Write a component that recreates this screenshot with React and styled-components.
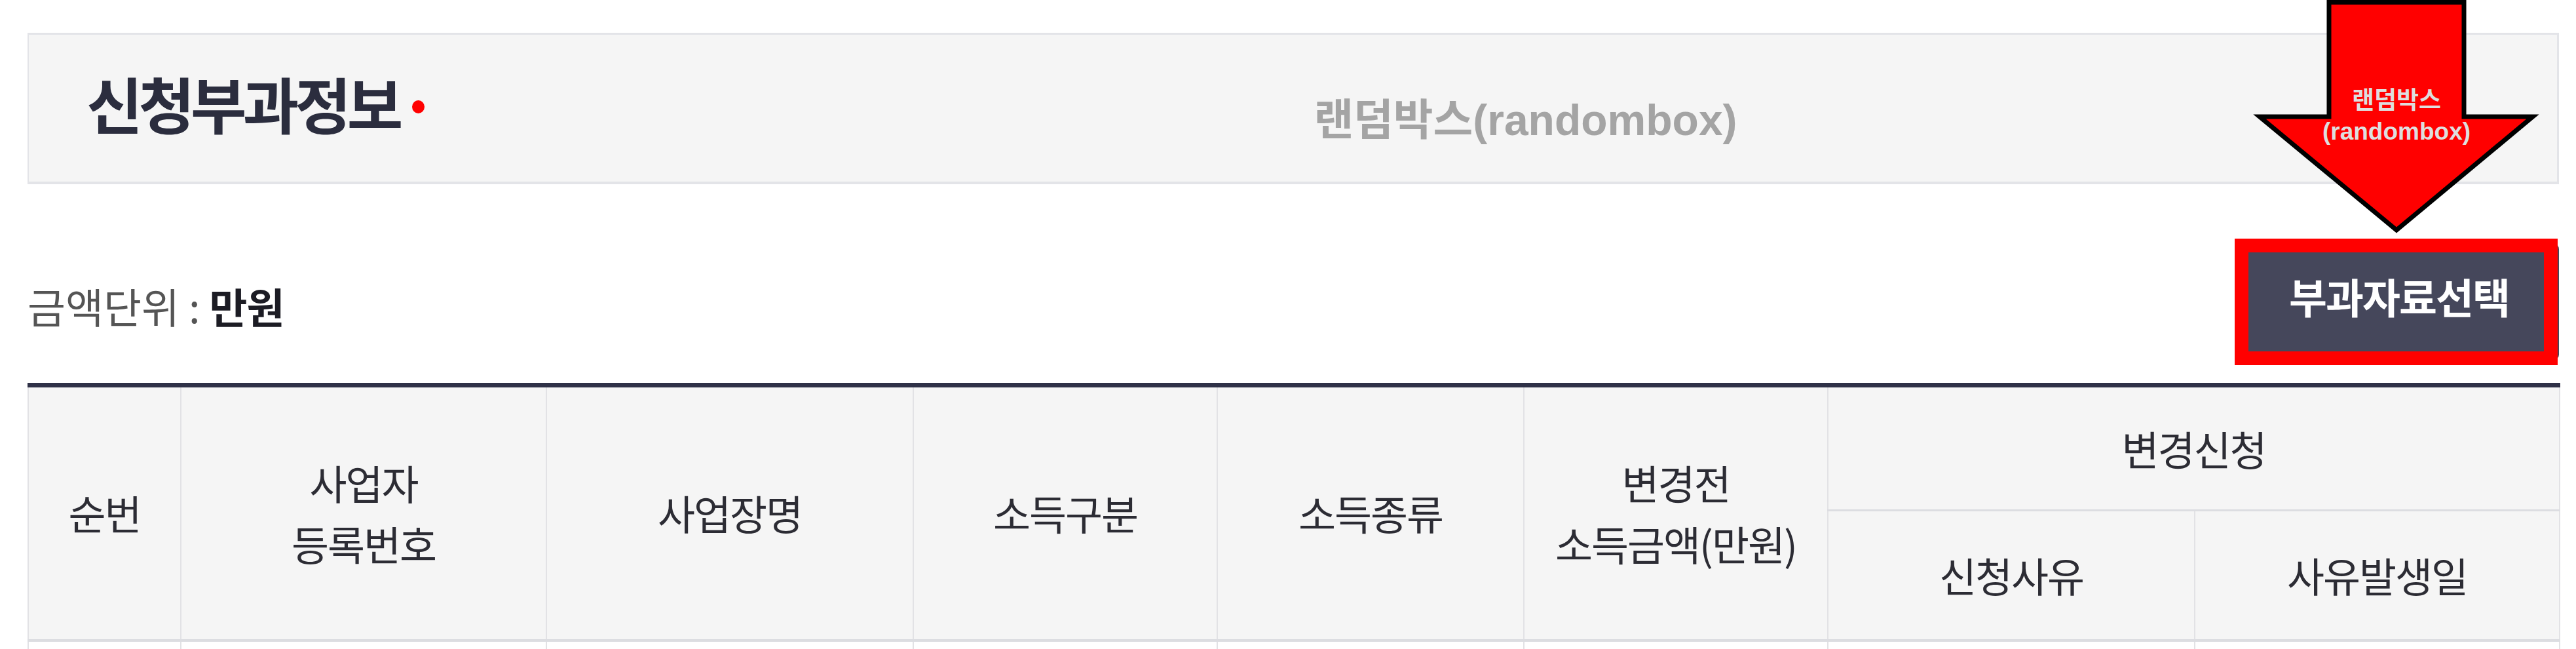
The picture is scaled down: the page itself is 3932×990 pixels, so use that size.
import React from "react";
import styled, { createGlobalStyle } from "styled-components";

const GlobalStyle = createGlobalStyle`
  html, body {
    margin: 0;
    padding: 0;
    background: #ffffff;
    overflow: hidden;
  }
  body {
    font-family: "Noto Sans CJK KR", "Noto Sans", sans-serif;
    color: #333333;
  }
`;

const Page = styled.div`
  position: relative;
  width: 3932px;
  height: 990px;
  overflow: hidden;
  box-sizing: border-box;
  padding: 50px 26px 0 42px;
`;

const InfoPanel = styled.section`
  display: flex;
  align-items: center;
  height: 231px;
  box-sizing: border-box;
  background: #f5f5f5;
  border: 3px solid #e3e4e8;
  border-left-width: 2px;
  border-bottom-width: 4px;
  padding-left: 88px;
`;

const Title = styled.h2`
  display: flex;
  align-items: center;
  margin: -18px 0 0;
  font-size: 93px;
  font-weight: 700;
  line-height: 1;
  letter-spacing: -6px;
  color: #2b2d3e;

  &::after {
    content: "";
    width: 19px;
    height: 20px;
    margin-left: 20px;
    margin-top: 14px;
    border-radius: 50%;
    background: #ff0000;
  }
`;

const RandomLabel = styled.span`
  margin-left: 1357px;
  margin-top: 36px;
  font-family: "Liberation Sans", "Noto Sans CJK KR", sans-serif;
  font-size: 66px;
  font-weight: 700;
  line-height: 1;
  color: #a4a4a4;
`;

const Callout = styled.div`
  position: absolute;
  left: 3434px;
  top: 0;
  width: 445px;
  height: 365px;
  z-index: 3;
  pointer-events: none;

  svg {
    display: block;
  }
`;

const CalloutText = styled.div`
  position: absolute;
  left: 0;
  top: 130px;
  width: 448px;
  text-align: center;
  font-family: "Liberation Sans", "Noto Sans CJK KR", sans-serif;
  font-size: 37px;
  font-weight: 700;
  line-height: 47px;
  color: #dedede;
`;

const Toolbar = styled.div`
  display: flex;
  align-items: center;
  justify-content: space-between;
  height: 177px;
  margin-top: 91px;
`;

const UnitText = styled.p`
  margin: 0;
  padding-top: 10px;
  font-size: 63px;
  line-height: 1;
  letter-spacing: 0;
  color: #555555;

  strong {
    font-weight: 700;
    letter-spacing: -1px;
    color: #1c1c24;
  }
`;

const ActionButton = styled.button`
  position: relative;
  width: 488px;
  height: 177px;
  padding: 0 0 20px;
  border: none;
  border-radius: 8px;
  background: #45475b;
  font-family: inherit;
  font-size: 63px;
  font-weight: 700;
  letter-spacing: -2px;
  color: #ffffff;
`;

const HighlightFrame = styled.span`
  position: absolute;
  left: -7px;
  top: -8px;
  width: 493px;
  height: 193px;
  box-sizing: border-box;
  border: 21px solid #ff0000;
  pointer-events: none;
`;

const Table = styled.table`
  width: 100%;
  margin-top: 35px;
  table-layout: fixed;
  border-collapse: collapse;
  border-top: 7px solid #2f3147;
`;

const HeadRow = styled.tr`
  height: ${(p) => p.$h}px;
`;

const HeadCell = styled.th`
  padding: 0;
  background: #f5f5f5;
  border: 2px solid #e2e2e5;
  border-bottom-width: ${(p) => (p.$edge ? 4 : 3)}px;
  border-bottom-color: #dcdde1;
  font-size: 62px;
  font-weight: 400;
  line-height: 93px;
  letter-spacing: -2px;
  color: #2c2c34;
  vertical-align: middle;
  text-align: center;
`;

const BodyCell = styled.td`
  height: 80px;
  border-left: 2px solid #e2e2e5;
  border-right: 2px solid #e2e2e5;
  background: #ffffff;
`;

const columns = [233, 558, 560, 464, 468, 464, 560, 557];

export default function App() {
  return (
    <>
      <GlobalStyle />
      <Page>
        <InfoPanel>
          <Title>신청부과정보</Title>
          <RandomLabel>랜덤박스(randombox)</RandomLabel>
        </InfoPanel>

        <Callout>
          <svg width="445" height="365" viewBox="0 0 445 365">
            <polygon
              points="121,3.5 327,3.5 327,178 432,178 224,351 15,178 121,178"
              fill="#ff0000"
              stroke="#000000"
              strokeWidth="7"
              strokeLinejoin="miter"
            />
          </svg>
          <CalloutText>
            랜덤박스
            <br />
            (randombox)
          </CalloutText>
        </Callout>

        <Toolbar>
          <UnitText>
            금액단위 : <strong>만원</strong>
          </UnitText>
          <ActionButton type="button">
            부과자료선택
            <HighlightFrame />
          </ActionButton>
        </Toolbar>

        <Table>
          <colgroup>
            {columns.map((w, i) => (
              <col key={i} style={{ width: w }} />
            ))}
          </colgroup>
          <thead>
            <HeadRow $h={191}>
              <HeadCell rowSpan={2} $edge>순번</HeadCell>
              <HeadCell rowSpan={2} $edge>
                사업자
                <br />
                등록번호
              </HeadCell>
              <HeadCell rowSpan={2} $edge>사업장명</HeadCell>
              <HeadCell rowSpan={2} $edge>소득구분</HeadCell>
              <HeadCell rowSpan={2} $edge>소득종류</HeadCell>
              <HeadCell rowSpan={2} $edge>
                변경전
                <br />
                소득금액(만원)
              </HeadCell>
              <HeadCell colSpan={2}>변경신청</HeadCell>
            </HeadRow>
            <HeadRow $h={198}>
              <HeadCell $edge>신청사유</HeadCell>
              <HeadCell $edge>사유발생일</HeadCell>
            </HeadRow>
          </thead>
          <tbody>
            <tr>
              {columns.map((_, i) => (
                <BodyCell key={i} />
              ))}
            </tr>
          </tbody>
        </Table>
      </Page>
    </>
  );
}
